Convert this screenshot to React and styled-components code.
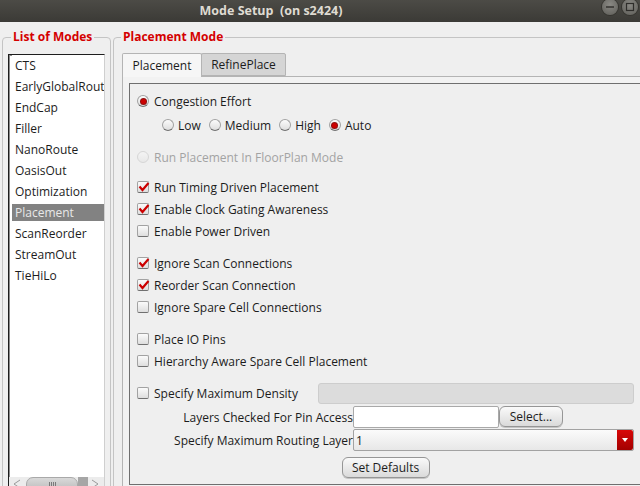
import React from "react";
import styled, { createGlobalStyle } from "styled-components";

const GlobalStyle = createGlobalStyle`
  html, body {
    margin: 0;
    padding: 0;
    width: 640px;
    height: 486px;
    overflow: hidden;
    background: #efefef;
  }
  body {
    font-family: "Open Sans", "Noto Sans", "DejaVu Sans", sans-serif;
    font-size: 12px;
    color: #1c1c1c;
  }
`;

const modes = [
  "CTS",
  "EarlyGlobalRoute",
  "EndCap",
  "Filler",
  "NanoRoute",
  "OasisOut",
  "Optimization",
  "Placement",
  "ScanReorder",
  "StreamOut",
  "TieHiLo",
];

const efforts = [
  { name: "Low", checked: false },
  { name: "Medium", checked: false },
  { name: "High", checked: false },
  { name: "Auto", checked: true },
];

const App = () => {
  return (
    <>
      <GlobalStyle />
      <Window>
        <TitleBar>
          <Title>Mode Setup&nbsp;&nbsp;(on s2424)</Title>
          <WinButtons>
            <WinButton>
              <svg width="16" height="16" viewBox="0 0 16 16">
                <line x1="4" y1="8" x2="12" y2="8" stroke="#2e2d2a" strokeWidth="1.4" />
              </svg>
            </WinButton>
            <WinButton>
              <svg width="16" height="16" viewBox="0 0 16 16">
                <rect x="4.5" y="4.5" width="7" height="7" fill="none" stroke="#2e2d2a" strokeWidth="1.2" />
              </svg>
            </WinButton>
          </WinButtons>
        </TitleBar>

        <Body>
          <Group $width="109px" $pad="10px 5px 4px 5px">
            <Legend $offset="3px">List of Modes</Legend>
            <ModeList>
              <Items>
                {modes.map((m) => (
                  <ModeItem key={m} $selected={m === "Placement"}>
                    {m}
                  </ModeItem>
                ))}
              </Items>
              <HScroll>
                <ScrollArrow>
                  <svg width="10" height="10" viewBox="0 0 10 10">
                    <path d="M8 1 L2 5 L8 9" fill="none" stroke="#9a9a9a" strokeWidth="1" />
                  </svg>
                </ScrollArrow>
                <Thumb>
                  <Grip />
                </Thumb>
                <Trough />
                <ScrollArrow>
                  <svg width="10" height="10" viewBox="0 0 10 10">
                    <path d="M2 1 L8 5 L2 9" fill="none" stroke="#9a9a9a" strokeWidth="1" />
                  </svg>
                </ScrollArrow>
              </HScroll>
            </ModeList>
          </Group>

          <Group $pad="9px 8px 4px 8px" $grow>
            <Legend $offset="-1px">Placement Mode</Legend>
            <TabBar>
              <Tab $active $width="80px">Placement</Tab>
              <Tab $width="85px">RefinePlace</Tab>
            </TabBar>
            <TabPane>
              <Frame>
                <OptionRow>
                  <Radio $checked />
                  <Label>Congestion Effort</Label>
                </OptionRow>
                <SubRow>
                  {efforts.map((e) => (
                    <Choice key={e.name}>
                      <Radio $checked={e.checked} />
                      <Label>{e.name}</Label>
                    </Choice>
                  ))}
                </SubRow>
                <OptionRow $top="10px">
                  <Radio $disabled />
                  <Label $disabled>Run Placement In FloorPlan Mode</Label>
                </OptionRow>

                <OptionRow $top="8px">
                  <Check $checked />
                  <Label>Run Timing Driven Placement</Label>
                </OptionRow>
                <OptionRow>
                  <Check $checked />
                  <Label>Enable Clock Gating Awareness</Label>
                </OptionRow>
                <OptionRow>
                  <Check />
                  <Label>Enable Power Driven</Label>
                </OptionRow>

                <OptionRow $top="10px">
                  <Check $checked />
                  <Label>Ignore Scan Connections</Label>
                </OptionRow>
                <OptionRow>
                  <Check $checked />
                  <Label>Reorder Scan Connection</Label>
                </OptionRow>
                <OptionRow>
                  <Check />
                  <Label>Ignore Spare Cell Connections</Label>
                </OptionRow>

                <OptionRow $top="10px">
                  <Check />
                  <Label>Place IO Pins</Label>
                </OptionRow>
                <OptionRow>
                  <Check />
                  <Label>Hierarchy Aware Spare Cell Placement</Label>
                </OptionRow>

                <OptionRow $top="10px">
                  <Check />
                  <Label $width="159px">Specify Maximum Density</Label>
                  <DensityField />
                </OptionRow>

                <FieldRow $top="2px">
                  <FieldLabel>Layers Checked For Pin Access</FieldLabel>
                  <TextInput />
                  <PushButton $width="64px">Select...</PushButton>
                </FieldRow>
                <FieldRow $top="1px">
                  <FieldLabel>Specify Maximum Routing Layer</FieldLabel>
                  <Combo>
                    <ComboText>1</ComboText>
                    <ComboArrow>
                      <svg width="8" height="6" viewBox="0 0 8 6">
                        <path d="M1 1 L7 1 L4 5 Z" fill="#ffffff" />
                      </svg>
                    </ComboArrow>
                  </Combo>
                </FieldRow>

                <ButtonRow>
                  <PushButton $width="88px">Set Defaults</PushButton>
                </ButtonRow>
              </Frame>
            </TabPane>
          </Group>
        </Body>
      </Window>
    </>
  );
};

export default App;

const Window = styled.div`
  width: 660px;
  height: 500px;
  display: flex;
  flex-direction: column;
  background: #efefef;
`;

const TitleBar = styled.div`
  height: 22px;
  flex: none;
  display: flex;
  align-items: center;
  background: linear-gradient(#4c4b46, #3b3a36);
  width: 640px;
`;

const Title = styled.div`
  flex: 1;
  text-align: center;
  padding-right: 60px;
  color: #dfdbd2;
  font-weight: 700;
  font-size: 12.5px;
  white-space: pre;
  line-height: 22px;
`;

const WinButtons = styled.div`
  display: flex;
  gap: 4px;
  align-self: flex-start;
  margin-top: -1px;
  margin-right: 2px;
`;

const WinButton = styled.div`
  width: 16px;
  height: 16px;
  border-radius: 50%;
  background: radial-gradient(circle at 50% 35%, #8a8984, #5d5c57);
  box-shadow: 0 0 0 1px #35342f;
  display: flex;
  align-items: center;
  justify-content: center;
`;

const Body = styled.div`
  flex: 1;
  display: flex;
  gap: 2px;
  padding: 8px 2px 3px 2px;
  min-height: 0;
`;

const Group = styled.fieldset`
  margin: 0;
  border: 1px solid #c4c4c4;
  border-radius: 4px;
  padding: ${(p) => p.$pad};
  width: ${(p) => p.$width || "auto"};
  flex: ${(p) => (p.$grow ? 1 : "none")};
  box-sizing: border-box;
  display: flex;
  flex-direction: column;
  min-width: 0;
`;

const Legend = styled.legend`
  margin-left: ${(p) => p.$offset};
  padding: 0 2px;
  color: #d40000;
  font-weight: 700;
  font-size: 12px;
  line-height: 14px;
`;

const ModeList = styled.div`
  flex: 1;
  display: flex;
  flex-direction: column;
  background: #ffffff;
  border: 1px solid;
  border-color: #1e1e1e #cfcfcf #cfcfcf #1e1e1e;
  box-shadow: inset 1px 1px 0 #8a8a8a;
  overflow: hidden;
`;

const Items = styled.div`
  flex: 1;
`;

const ModeItem = styled.div`
  height: 21px;
  display: flex;
  align-items: center;
  white-space: nowrap;
  overflow: hidden;
  margin-left: 3px;
  padding-left: 3px;
  border-top: 2px solid #fff;
  border-bottom: 2px solid #fff;
  box-sizing: border-box;
  background: ${(p) => (p.$selected ? "#828282" : "transparent")};
  color: ${(p) => (p.$selected ? "#e8e8e8" : "#1c1c1c")};
`;

const HScroll = styled.div`
  height: 14px;
  flex: none;
  display: flex;
  align-items: stretch;
  background: #ececec;
  padding: 0 1px;
`;

const ScrollArrow = styled.div`
  width: 14px;
  display: flex;
  align-items: center;
  justify-content: center;
`;

const Thumb = styled.div`
  width: 52px;
  margin-left: 2px;
  border-radius: 7px 7px 0 0;
  background: linear-gradient(#d9d9d9, #bdbdbd);
  border: 1px solid #a9a9a9;
  display: flex;
  justify-content: center;
  padding-top: 4px;
  box-sizing: border-box;
`;

const Grip = styled.div`
  width: 7px;
  height: 6px;
  background: repeating-linear-gradient(90deg, #7a7a7a 0 1px, transparent 1px 2px);
`;

const Trough = styled.div`
  width: 10px;
  background: #a6a6a6;
`;

const TabBar = styled.div`
  display: flex;
  height: 23px;
  flex: none;
  position: relative;
  z-index: 1;
`;

const Tab = styled.div`
  width: ${(p) => p.$width};
  box-sizing: border-box;
  height: ${(p) => (p.$active ? "24px" : "23px")};
  display: flex;
  align-items: center;
  justify-content: center;
  border: 1px solid #b4b4b4;
  border-bottom: ${(p) => (p.$active ? "none" : "1px solid #b4b4b4")};
  margin-left: ${(p) => (p.$active ? "0" : "-1px")};
  border-radius: 2px 2px 0 0;
  background: ${(p) => (p.$active ? "#f6f6f6" : "#d5d5d5")};
  color: #1c1c1c;
`;

const TabPane = styled.div`
  flex: 1;
  border: 1px solid #b4b4b4;
  background: #f2f2f2;
  padding: 6px;
  display: flex;
  flex-direction: column;
`;

const Frame = styled.div`
  flex: 1;
  border: 1px solid #6f6f6f;
  background: #efefef;
  padding: 6px 7px 0 7px;
  display: flex;
  flex-direction: column;
`;

const OptionRow = styled.div`
  height: 22px;
  display: flex;
  align-items: center;
  gap: 5px;
  margin-top: ${(p) => p.$top || "0"};
`;

const SubRow = styled.div`
  height: 22px;
  display: flex;
  align-items: center;
  gap: 8px;
  margin: 2px 0 0 25px;
`;

const Choice = styled.span`
  display: flex;
  align-items: center;
  gap: 4px;
`;

const boxBase = `
  width: 12px;
  height: 12px;
  flex: none;
  box-sizing: border-box;
  border: 1px solid #a2a2a2;
  border-bottom-color: #707070;
  background: linear-gradient(#fbfbfb, #dedede);
`;

const CheckBox = styled.span`
  ${boxBase}
  border-radius: 2px;
  position: relative;
  & svg {
    position: absolute;
    left: 0;
    top: -1px;
  }
`;

const Check = ({ $checked }) => (
  <CheckBox>
    {$checked && (
      <svg width="12" height="12" viewBox="0 0 12 12">
        <path d="M1.5 5.5 L4.5 9 L10.5 2" fill="none" stroke="#cc0000" strokeWidth="2.2" />
      </svg>
    )}
  </CheckBox>
);

const Radio = styled.span`
  ${boxBase}
  border-radius: 50%;
  display: flex;
  align-items: center;
  justify-content: center;
  ${(p) => p.$disabled && "border-color: #d6d6d6; background: linear-gradient(#f4f4f4, #e8e8e8);"}
  &::after {
    content: "";
    width: 5px;
    height: 5px;
    border-radius: 50%;
    background: ${(p) => (p.$checked ? "#cc0000" : "transparent")};
    box-shadow: ${(p) => (p.$checked ? "0 0 0 1px #8e1010" : "none")};
  }
`;

const Label = styled.span`
  white-space: nowrap;
  color: ${(p) => (p.$disabled ? "#a3a3a3" : "#1c1c1c")};
  width: ${(p) => p.$width || "auto"};
  flex: none;
`;

const DensityField = styled.div`
  flex: 1;
  height: 21px;
  align-self: flex-end;
  background: #dcdcdc;
  border: 1px solid #cdcdcd;
  border-radius: 3px;
  box-sizing: border-box;
`;

const FieldRow = styled.div`
  height: 22px;
  display: grid;
  grid-template-columns: 216px auto auto 1fr;
  align-items: stretch;
  margin-top: ${(p) => p.$top};
`;

const FieldLabel = styled.span`
  text-align: right;
  white-space: nowrap;
  align-self: center;
`;

const TextInput = styled.div`
  width: 146px;
  box-sizing: border-box;
  background: #ffffff;
  border: 1px solid #a9a9a9;
  border-radius: 2px;
`;

const PushButton = styled.div`
  width: ${(p) => p.$width};
  height: 21px;
  box-sizing: border-box;
  display: flex;
  align-items: center;
  justify-content: center;
  border: 1px solid #969696;
  border-radius: 6px;
  background: linear-gradient(#fafafa, #dadada);
  box-shadow: 0 1px 0 #c4c4c4;
  color: #1c1c1c;
`;

const Combo = styled.div`
  grid-column: 2 / 5;
  display: flex;
  align-items: stretch;
  border: 1px solid #a2a2a2;
  border-radius: 2px;
  background: linear-gradient(#fbfbfb, #e7e7e7);
  box-sizing: border-box;
`;

const ComboText = styled.span`
  flex: 1;
  padding-left: 2px;
  display: flex;
  align-items: center;
`;

const ComboArrow = styled.div`
  width: 16px;
  display: flex;
  align-items: center;
  justify-content: center;
  background: linear-gradient(#d80808, #a30000);
  border-radius: 0 2px 2px 0;
`;

const ButtonRow = styled.div`
  display: flex;
  justify-content: center;
  margin-top: 6px;
`;
